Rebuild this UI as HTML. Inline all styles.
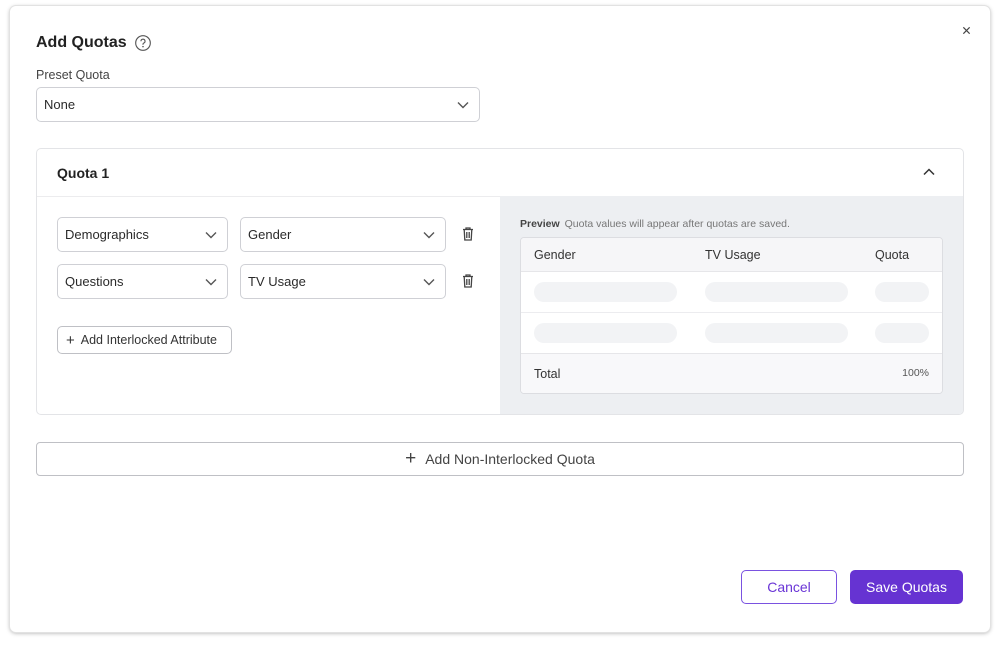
<!DOCTYPE html>
<html><head><style>
*{box-sizing:border-box;margin:0;padding:0}
body{width:1000px;height:645px;background:#fff;font-family:"Liberation Sans",sans-serif;color:#222;position:relative;overflow:hidden}
.modal{position:absolute;left:10px;top:6px;width:980px;height:626px;background:#fff;border-radius:6px;box-shadow:0 0 0 1px #e2e2e2,0 1px 4px rgba(0,0,0,.35)}
.abs{position:absolute}
.sel{position:absolute;border:1px solid #cfd0d5;border-radius:5px;background:#fff;font-size:13px;color:#2a2a2a;padding-left:7px;display:flex;align-items:center}
.sel svg{position:absolute;right:10px;top:50%;margin-top:-4px}
.sk{position:absolute;height:20px;border-radius:10px;background:#f2f3f5}
</style></head><body>
<div class="modal">
<div class="abs" style="left:26px;top:28px;font-size:16px;font-weight:bold;color:#222">Add Quotas</div>
<svg class="abs" style="left:124px;top:28px" width="18" height="18" viewBox="0 0 16 16"><circle cx="8" cy="8" r="6.5" fill="none" stroke="#555" stroke-width="1"/><path d="M6.2 6.4a1.8 1.8 0 1 1 2.4 1.7c-.5.2-.6.5-.6 1v.4" fill="none" stroke="#555" stroke-width="1"/><circle cx="8" cy="11.2" r=".7" fill="#555"/></svg>
<div class="abs" style="left:26px;top:62px;font-size:12.5px;color:#444">Preset Quota</div>
<div class="sel" style="left:26px;top:81px;width:444px;height:35px">None<svg width="12" height="8" viewBox="0 0 12 8"><path d="M1 1.5l5 5 5-5" fill="none" stroke="#555" stroke-width="1.4"/></svg></div>
<svg class="abs" style="left:952px;top:20px" width="9" height="9" viewBox="0 0 10 10"><path d="M1.5 1.5l7 7M8.5 1.5l-7 7" stroke="#444" stroke-width="1.3"/></svg>

<div class="abs" style="left:26px;top:142px;width:928px;height:267px;border:1px solid #e3e4e7;border-radius:5px;overflow:hidden">
 <div class="abs" style="left:20px;top:16px;font-size:14px;font-weight:bold;color:#222">Quota 1</div>
 <svg class="abs" style="left:886px;top:19px" width="12" height="8" viewBox="0 0 12 8"><path d="M1 6.5l5-5 5 5" fill="none" stroke="#333" stroke-width="1.5"/></svg>
 <div class="abs" style="left:0;top:47px;width:928px;border-top:1px solid #ececee"></div>
 <div class="sel" style="left:20px;top:68px;width:171px;height:35px">Demographics<svg width="12" height="8" viewBox="0 0 12 8"><path d="M1 1.5l5 5 5-5" fill="none" stroke="#555" stroke-width="1.4"/></svg></div>
 <div class="sel" style="left:203px;top:68px;width:206px;height:35px">Gender<svg width="12" height="8" viewBox="0 0 12 8"><path d="M1 1.5l5 5 5-5" fill="none" stroke="#555" stroke-width="1.4"/></svg></div>
 <div class="sel" style="left:20px;top:115px;width:171px;height:35px">Questions<svg width="12" height="8" viewBox="0 0 12 8"><path d="M1 1.5l5 5 5-5" fill="none" stroke="#555" stroke-width="1.4"/></svg></div>
 <div class="sel" style="left:203px;top:115px;width:206px;height:35px">TV Usage<svg width="12" height="8" viewBox="0 0 12 8"><path d="M1 1.5l5 5 5-5" fill="none" stroke="#555" stroke-width="1.4"/></svg></div>
 <svg class="abs" style="left:425px;top:78px" width="12" height="14" viewBox="0 0 12 14"><path d="M1 2.5h10M4 2.5V1h4v1.5M2.2 2.5l.6 10.5h6.4l.6-10.5M4.8 5v6M7.2 5v6" fill="none" stroke="#444" stroke-width="1.3"/></svg>
 <svg class="abs" style="left:425px;top:125px" width="12" height="14" viewBox="0 0 12 14"><path d="M1 2.5h10M4 2.5V1h4v1.5M2.2 2.5l.6 10.5h6.4l.6-10.5M4.8 5v6M7.2 5v6" fill="none" stroke="#444" stroke-width="1.3"/></svg>
 <div class="abs" style="left:20px;top:177px;width:175px;height:28px;border:1px solid #bfc0c5;border-radius:5px;font-size:12.5px;color:#333;display:flex;align-items:center;padding-left:8px"><span style="font-size:15px;margin-right:6px">+</span>Add Interlocked Attribute</div>
 <div class="abs" style="left:463px;top:47px;width:465px;height:220px;background:#edeff2">
  <div class="abs" style="left:20px;top:22px;font-size:10.5px;color:#444;font-weight:bold">Preview <span style="font-weight:normal;color:#777;margin-left:2px">Quota values will appear after quotas are saved.</span></div>
  <div class="abs" style="left:20px;top:41px;width:423px;height:157px;background:#fff;border:1px solid #dcdde1;border-radius:4px;overflow:hidden">
   <div class="abs" style="left:0;top:0;width:423px;height:34px;background:#f6f6f8;border-bottom:1px solid #e6e6e9"></div>
   <div class="abs" style="left:13px;top:10px;font-size:12.5px;color:#333">Gender</div>
   <div class="abs" style="left:184px;top:10px;font-size:12.5px;color:#333">TV Usage</div>
   <div class="abs" style="left:354px;top:10px;font-size:12.5px;color:#333">Quota</div>
   <div class="sk" style="left:13px;top:44px;width:143px"></div><div class="sk" style="left:184px;top:44px;width:143px"></div><div class="sk" style="left:354px;top:44px;width:54px"></div>
   <div class="abs" style="left:0;top:74px;width:423px;border-top:1px solid #ececef"></div>
   <div class="sk" style="left:13px;top:85px;width:143px"></div><div class="sk" style="left:184px;top:85px;width:143px"></div><div class="sk" style="left:354px;top:85px;width:54px"></div>
   <div class="abs" style="left:0;top:115px;width:423px;height:42px;background:#f8f8fa;border-top:1px solid #e6e6e9"></div>
   <div class="abs" style="left:13px;top:129px;font-size:12.5px;color:#333">Total</div>
   <div class="abs" style="right:13px;top:129px;font-size:10.5px;color:#555">100%</div>
  </div>
 </div>
</div>

<div class="abs" style="left:26px;top:436px;width:928px;height:34px;border:1px solid #bfc0c5;border-radius:4px;display:flex;align-items:center;justify-content:center;font-size:14px;color:#444"><span style="font-size:19px;margin-right:9px;font-weight:300">+</span>Add Non-Interlocked Quota</div>

<div class="abs" style="left:731px;top:564px;width:96px;height:34px;border:1px solid #7a52e0;border-radius:5px;color:#6a35d6;font-size:14px;display:flex;align-items:center;justify-content:center">Cancel</div>
<div class="abs" style="left:840px;top:564px;width:113px;height:34px;background:#6633d2;border-radius:5px;color:#fff;font-size:14px;display:flex;align-items:center;justify-content:center">Save Quotas</div>
</div>
</body></html>
